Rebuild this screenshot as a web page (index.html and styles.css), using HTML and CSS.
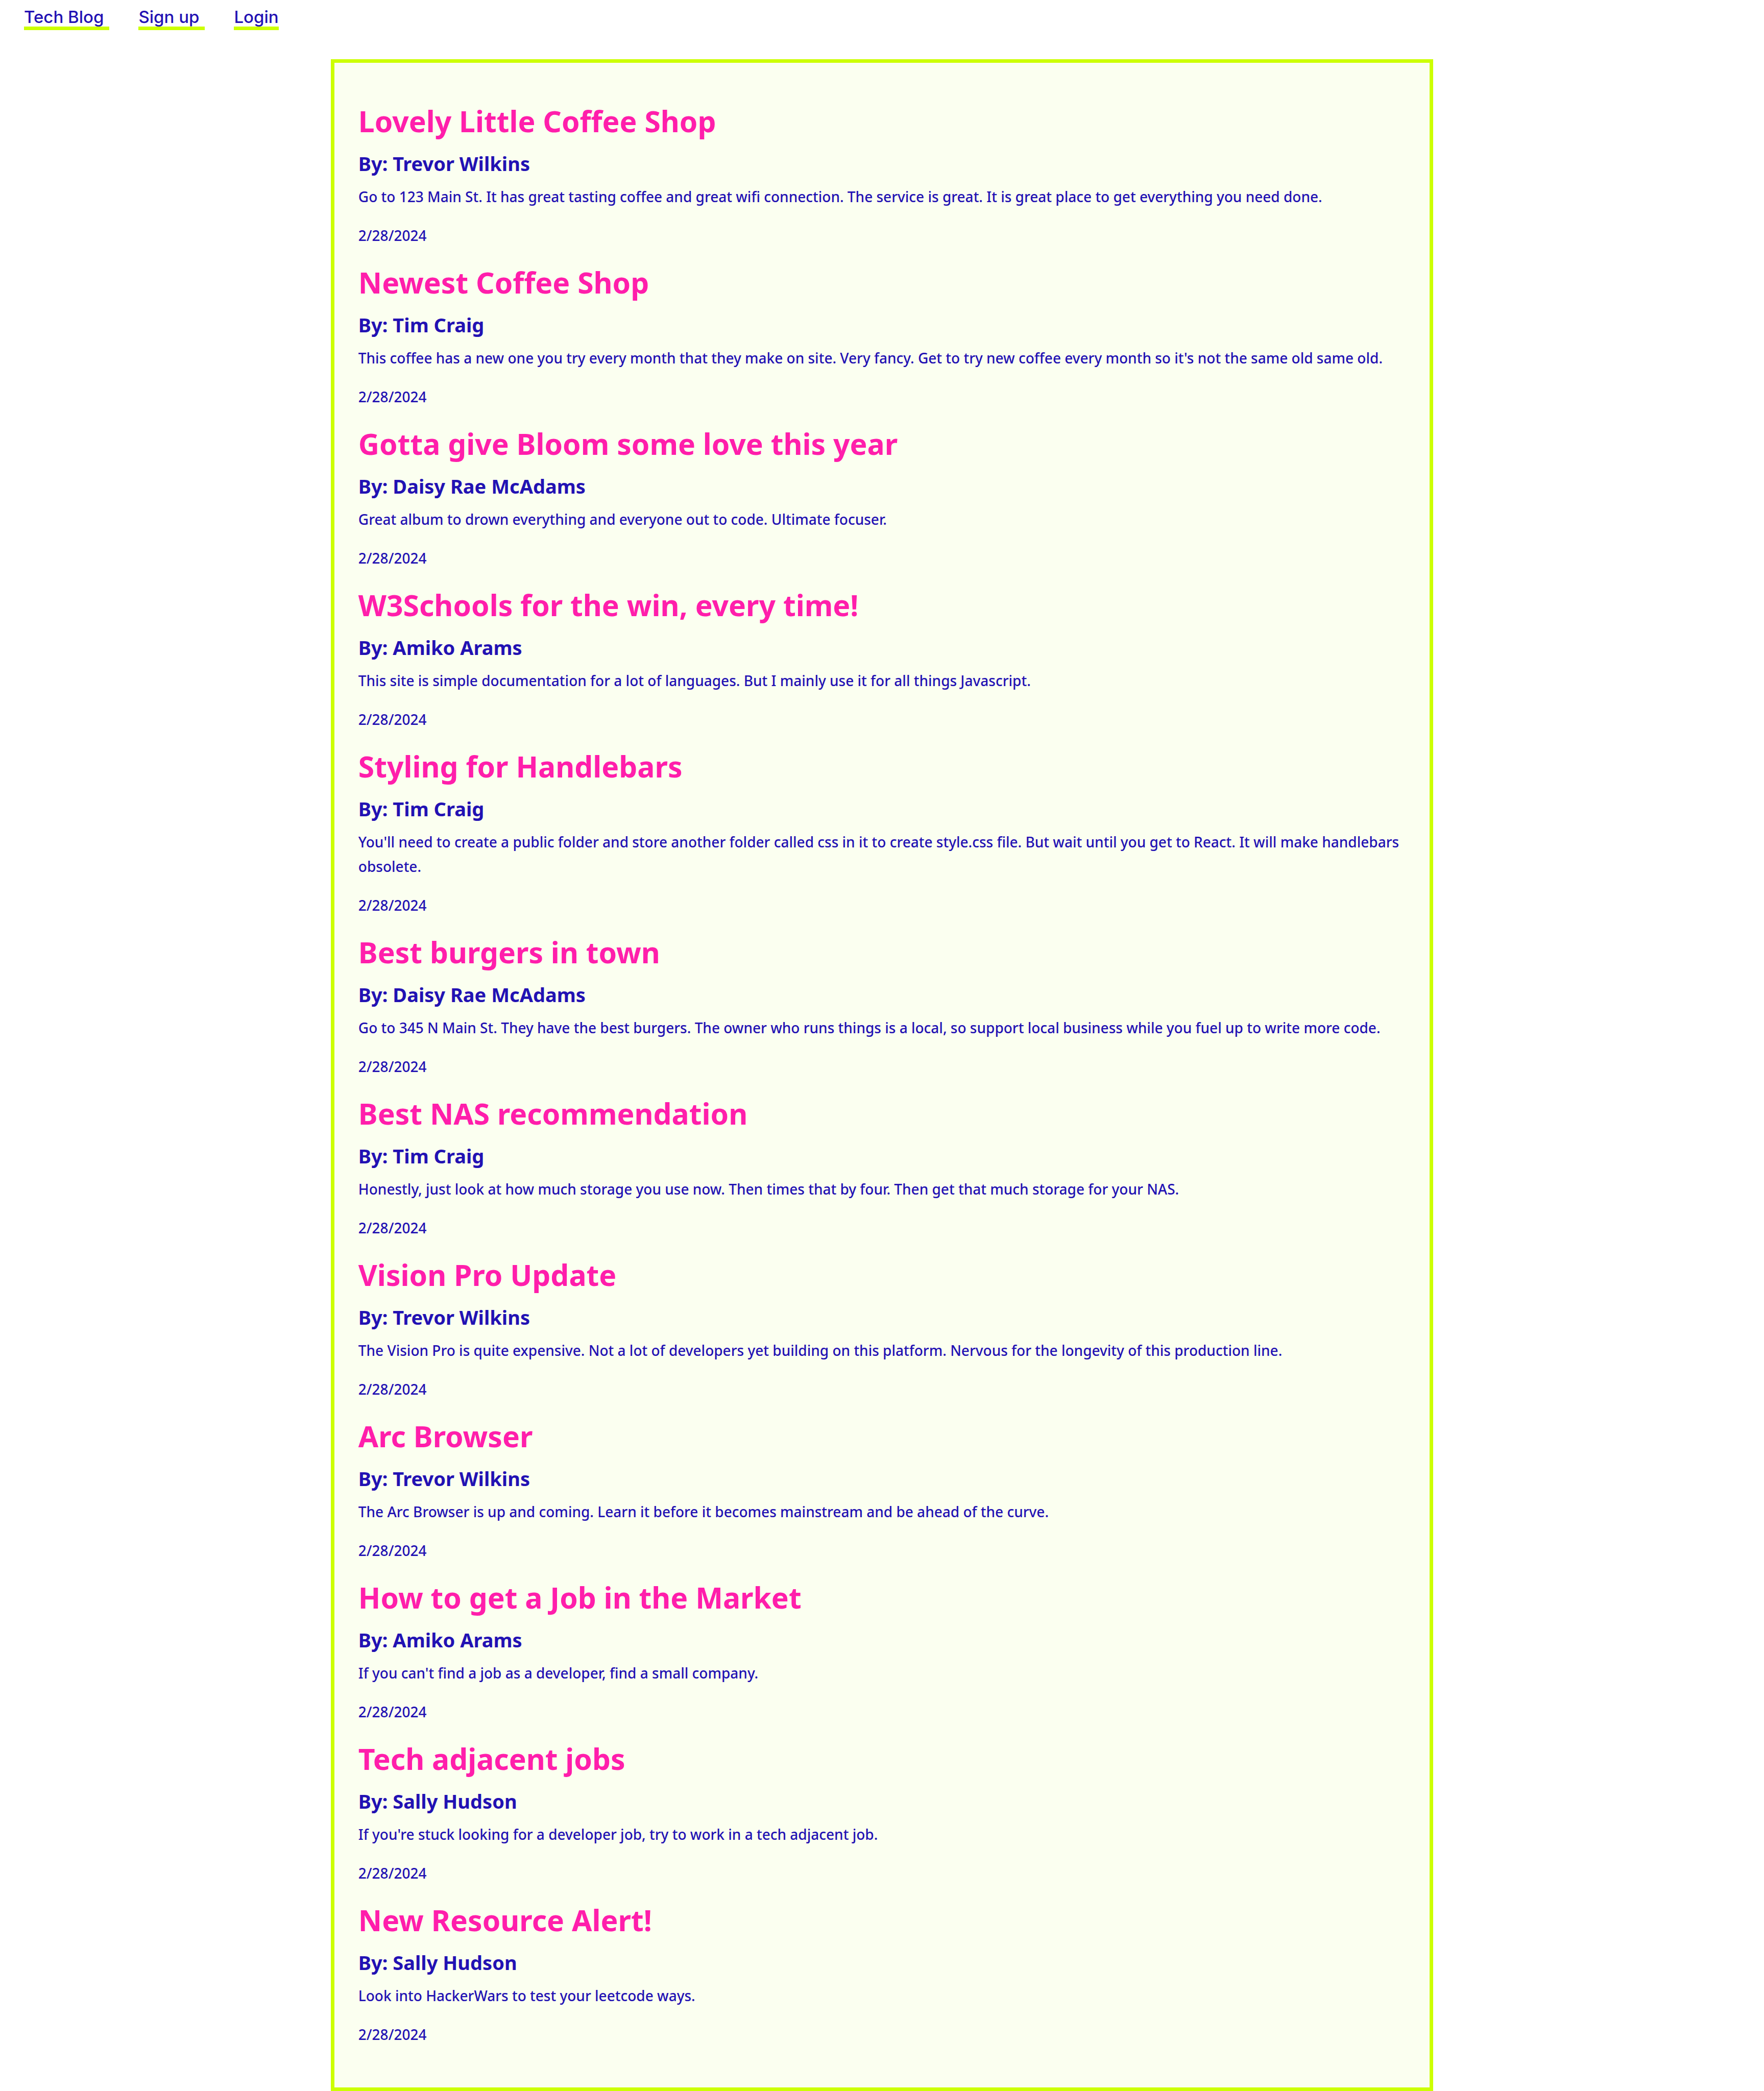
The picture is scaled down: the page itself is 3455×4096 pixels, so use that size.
FILE: index.html
```
<!DOCTYPE html>
<html lang="en">
<head>
  <meta charset="utf-8">
  <meta name="viewport" content="width=device-width, initial-scale=1">
  <title>Tech Blog</title>
  <link rel="stylesheet" href="styles.css">
</head>
<body>
  <header class="site-header">
    <nav class="site-nav">
      <a class="nav-link nav-link-spaced" href="#">Tech Blog</a>
      <a class="nav-link nav-link-spaced" href="#">Sign up</a>
      <a class="nav-link" href="#">Login</a>
    </nav>
  </header>
  <main class="posts">
    <article class="post">
      <h2 class="post-title">Lovely Little Coffee Shop</h2>
      <h3 class="post-author">By: Trevor Wilkins</h3>
      <p class="post-text">Go to 123 Main St. It has great tasting coffee and great wifi connection. The service is great. It is great place to get everything you need done.</p>
      <p class="post-date">2/28/2024</p>
    </article>
    <article class="post">
      <h2 class="post-title">Newest Coffee Shop</h2>
      <h3 class="post-author">By: Tim Craig</h3>
      <p class="post-text">This coffee has a new one you try every month that they make on site. Very fancy. Get to try new coffee every month so it's not the same old same old.</p>
      <p class="post-date">2/28/2024</p>
    </article>
    <article class="post">
      <h2 class="post-title">Gotta give Bloom some love this year</h2>
      <h3 class="post-author">By: Daisy Rae McAdams</h3>
      <p class="post-text">Great album to drown everything and everyone out to code. Ultimate focuser.</p>
      <p class="post-date">2/28/2024</p>
    </article>
    <article class="post">
      <h2 class="post-title">W3Schools for the win, every time!</h2>
      <h3 class="post-author">By: Amiko Arams</h3>
      <p class="post-text">This site is simple documentation for a lot of languages. But I mainly use it for all things Javascript.</p>
      <p class="post-date">2/28/2024</p>
    </article>
    <article class="post">
      <h2 class="post-title">Styling for Handlebars</h2>
      <h3 class="post-author">By: Tim Craig</h3>
      <p class="post-text">You'll need to create a public folder and store another folder called css in it to create style.css file. But wait until you get to React. It will make handlebars obsolete.</p>
      <p class="post-date">2/28/2024</p>
    </article>
    <article class="post">
      <h2 class="post-title">Best burgers in town</h2>
      <h3 class="post-author">By: Daisy Rae McAdams</h3>
      <p class="post-text">Go to 345 N Main St. They have the best burgers. The owner who runs things is a local, so support local business while you fuel up to write more code.</p>
      <p class="post-date">2/28/2024</p>
    </article>
    <article class="post">
      <h2 class="post-title">Best NAS recommendation</h2>
      <h3 class="post-author">By: Tim Craig</h3>
      <p class="post-text">Honestly, just look at how much storage you use now. Then times that by four. Then get that much storage for your NAS.</p>
      <p class="post-date">2/28/2024</p>
    </article>
    <article class="post">
      <h2 class="post-title">Vision Pro Update</h2>
      <h3 class="post-author">By: Trevor Wilkins</h3>
      <p class="post-text">The Vision Pro is quite expensive. Not a lot of developers yet building on this platform. Nervous for the longevity of this production line.</p>
      <p class="post-date">2/28/2024</p>
    </article>
    <article class="post">
      <h2 class="post-title">Arc Browser</h2>
      <h3 class="post-author">By: Trevor Wilkins</h3>
      <p class="post-text">The Arc Browser is up and coming. Learn it before it becomes mainstream and be ahead of the curve.</p>
      <p class="post-date">2/28/2024</p>
    </article>
    <article class="post">
      <h2 class="post-title">How to get a Job in the Market</h2>
      <h3 class="post-author">By: Amiko Arams</h3>
      <p class="post-text">If you can't find a job as a developer, find a small company.</p>
      <p class="post-date">2/28/2024</p>
    </article>
    <article class="post">
      <h2 class="post-title">Tech adjacent jobs</h2>
      <h3 class="post-author">By: Sally Hudson</h3>
      <p class="post-text">If you're stuck looking for a developer job, try to work in a tech adjacent job.</p>
      <p class="post-date">2/28/2024</p>
    </article>
    <article class="post">
      <h2 class="post-title">New Resource Alert!</h2>
      <h3 class="post-author">By: Sally Hudson</h3>
      <p class="post-text">Look into HackerWars to test your leetcode ways.</p>
      <p class="post-date">2/28/2024</p>
    </article>
  </main>
</body>
</html>
```
FILE: styles.css
```
:root {
  --lime: #ccff00;
  --pink: #ff1eab;
  --indigo: #2211b3;
  --cream: #fbfff0;
}

* {
  box-sizing: border-box;
}

body {
  margin: 0;
  background: #fff;
  color: var(--indigo);
  font: 500 28px/48px "Noto Sans", "Open Sans", sans-serif;
}

.site-header {
  padding: 14px 47px 57px;
}

.site-nav {
  display: flex;
  gap: 57px;
}

.nav-link {
  border-bottom: 7px solid var(--lime);
  color: inherit;
  font: 500 33px/38px Inter, sans-serif;
  text-decoration: none;
}

.nav-link-spaced {
  padding-right: 11px;
}

.posts {
  display: flex;
  flex-direction: column;
  gap: 34px;
  width: 62.5%;
  margin: 0 auto;
  padding: 80px 47px;
  border: 7px solid var(--lime);
  background: var(--cream);
}

.post-title {
  margin: 0 0 26px;
  color: var(--pink);
  font-size: 57px;
  font-weight: 700;
  line-height: 68px;
}

.post-author {
  margin: 0 0 18px;
  font-size: 38px;
  font-weight: 700;
  line-height: 46px;
}

.post-text {
  margin: 0 0 28px;
}

.post-date {
  margin: 0;
}
```
